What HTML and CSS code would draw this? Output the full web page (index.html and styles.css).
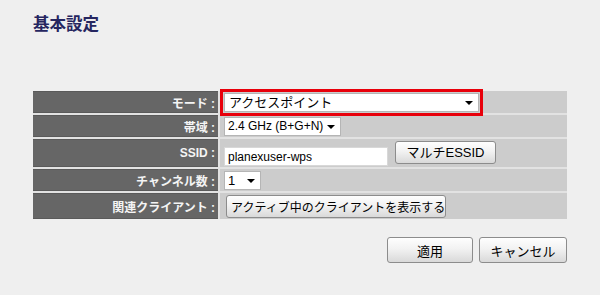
FILE: index.html
```html
<!DOCTYPE html>
<html lang="ja">
<head>
  <meta charset="UTF-8" />
  <title>基本設定</title>
  <link rel="stylesheet" href="styles.css">
</head>
<body>
  <h1 class="title">基本設定</h1>

  <form class="settings">
    <div class="form_grid">
      <div class="label">モード :</div>
      <div class="value">
        <span class="select select_mode highlight">アクセスポイント</span>
      </div>

      <div class="label">帯域 :</div>
      <div class="value">
        <span class="select select_band">2.4 GHz (B+G+N)</span>
      </div>

      <div class="label">SSID :</div>
      <div class="value">
        <input class="text_input" type="text" value="planexuser-wps">
        <button type="button" class="btn btn_essid">マルチESSID</button>
      </div>

      <div class="label">チャンネル数 :</div>
      <div class="value">
        <span class="select select_channel">1</span>
      </div>

      <div class="label">関連クライアント :</div>
      <div class="value">
        <button type="button" class="btn btn_client">アクティブ中のクライアントを表示する</button>
      </div>
    </div>

    <div class="actions">
      <button type="button" class="btn btn_apply">適用</button>
      <button type="button" class="btn btn_cancel">キャンセル</button>
    </div>
  </form>
</body>
</html>
```

FILE: styles.css
```css
body {
  margin: 0;
  background: #efefef;
  color: #000;
  font-family: "Liberation Sans", "Noto Sans CJK JP", sans-serif;
  font-size: 13px;
  padding: 14px 33px 0 33px;
}

.title {
  margin: 0;
  font-size: 16.5px;
  line-height: 20px;
  font-weight: bold;
  color: #262660;
}

.settings {
  margin-top: 57px;
  width: 534px;
}

.form_grid {
  display: grid;
  grid-template-columns: 185px 1fr;
  grid-template-rows: 22px 22px 28px 22px 26px;
  gap: 2px 2px;
  background: #e2e2e2;
}

.label {
  box-sizing: border-box;
  background: #666;
  border-top: 1px solid #5a5a5a;
  border-bottom: 1px solid #5a5a5a;
  color: #f4f4f4;
  font-size: 12px;
  font-weight: bold;
  padding-right: 3px;
  display: flex;
  align-items: center;
  justify-content: flex-end;
  white-space: nowrap;
}

.value {
  background: #ccc;
  padding-left: 4px;
  display: flex;
  align-items: center;
  gap: 7px;
}

.select {
  position: relative;
  box-sizing: border-box;
  height: 19px;
  line-height: 17px;
  background: #fff;
  border: 1px solid #b5b5b5;
  padding-left: 3px;
  white-space: nowrap;
}

.select::after {
  content: "";
  position: absolute;
  right: 5px;
  top: 7px;
  border-left: 4px solid transparent;
  border-right: 4px solid transparent;
  border-top: 4px solid #000;
}

.select_mode {
  width: 255px;
  padding-left: 4px;
}

.highlight {
  outline: 3px solid #e8000b;
  outline-offset: 1px;
}

.select_band {
  width: 117px;
  font-size: 12px;
}

.select_channel {
  width: 37px;
}

.text_input {
  box-sizing: border-box;
  width: 164px;
  height: 19px;
  margin: 7px 0 0 0;
  border: 1px solid #d8d8d8;
  background: #fff;
  padding: 0 3px;
  font-family: inherit;
  font-size: 12px;
}

.btn {
  box-sizing: border-box;
  font-family: inherit;
  font-size: 13px;
  color: #000;
  background: linear-gradient(#fefefe, #f2f2f2 45%, #d9d9d9);
  border: 1px solid #8c8c8c;
  border-radius: 3px;
  padding: 0 4px;
  white-space: nowrap;
  cursor: pointer;
}

.btn_essid {
  width: 101px;
  height: 23px;
  margin-top: -2px;
  padding-bottom: 3px;
}

.btn_client {
  width: 220px;
  height: 23px;
  margin-left: 2px;
  font-size: 12px;
}

.actions {
  display: flex;
  justify-content: flex-end;
  gap: 6px;
  margin-top: 18px;
}

.btn_apply {
  width: 86px;
  height: 26px;
}

.btn_cancel {
  width: 88px;
  height: 26px;
}
```
